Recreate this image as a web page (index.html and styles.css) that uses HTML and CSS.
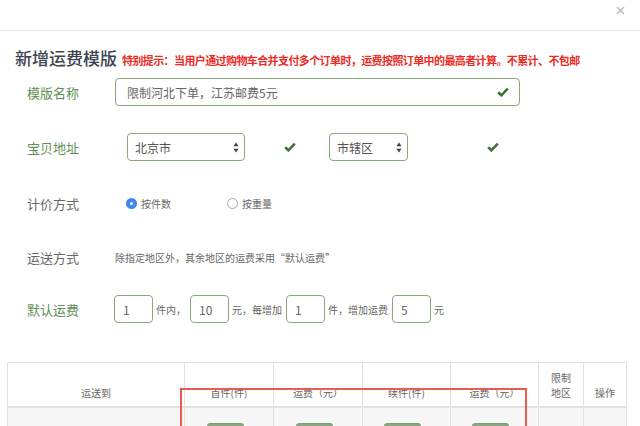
FILE: index.html
```html
<!DOCTYPE html>
<html lang="zh-CN">
<head>
<meta charset="utf-8">
<link rel="stylesheet" href="styles.css">
</head>
<body>
<div class="modal">
  <div class="modal-top">
    <span class="close"><svg width="9" height="9" viewBox="0 0 9 9"><path d="M1 1L8 8M8 1L1 8" stroke="#bdbdbd" stroke-width="1.6" fill="none"/></svg></span>
  </div>
  <div class="head">
    <h2 class="title">新增运费模版</h2>
    <span class="hint">特别提示：当用户通过购物车合并支付多个订单时，运费按照订单中的最高者计算。不累计、不包邮</span>
  </div>
  <div class="form">
    <div class="row r1">
      <label class="lbl ok">模版名称</label>
      <div class="field wide"><span class="val">限制河北下单，江苏邮费5元</span>
        <svg class="check" width="12" height="10" viewBox="0 0 12 10"><path d="M1.2 5.2L4.4 8.3L10.8 1.6" stroke="#3f7436" stroke-width="2.6" fill="none"/></svg>
      </div>
    </div>
    <div class="row r2">
      <label class="lbl ok">宝贝地址</label>
      <div class="field select s1"><span class="val">北京市</span>
        <svg class="arrows" width="6" height="11" viewBox="0 0 6 11"><path d="M3 0.5L5.6 4.3H0.4Z M3 10.5L5.6 6.7H0.4Z" fill="#444"/></svg>
      </div>
      <svg class="check c1" width="12" height="10" viewBox="0 0 12 10"><path d="M1.2 5.2L4.4 8.3L10.8 1.6" stroke="#3f7436" stroke-width="2.6" fill="none"/></svg>
      <div class="field select s2"><span class="val">市辖区</span>
        <svg class="arrows" width="6" height="11" viewBox="0 0 6 11"><path d="M3 0.5L5.6 4.3H0.4Z M3 10.5L5.6 6.7H0.4Z" fill="#444"/></svg>
      </div>
      <svg class="check c2" width="12" height="10" viewBox="0 0 12 10"><path d="M1.2 5.2L4.4 8.3L10.8 1.6" stroke="#3f7436" stroke-width="2.6" fill="none"/></svg>
    </div>
    <div class="row r3">
      <label class="lbl">计价方式</label>
      <div class="radios">
        <span class="opt"><span class="radio on"></span>按件数</span>
        <span class="opt second"><span class="radio"></span>按重量</span>
      </div>
    </div>
    <div class="row r4">
      <label class="lbl">运送方式</label>
      <span class="note">除指定地区外，其余地区的运费采用“默认运费”</span>
    </div>
    <div class="row r5">
      <label class="lbl ok">默认运费</label>
      <div class="fees">
        <div class="field small"><span class="val">1</span></div>
        <span class="sep">件内，</span>
        <div class="field small"><span class="val">10</span></div>
        <span class="sep">元，每增加</span>
        <div class="field small"><span class="val">1</span></div>
        <span class="sep">件，增加运费</span>
        <div class="field small"><span class="val">5</span></div>
        <span class="sep">元</span>
      </div>
    </div>
  </div>
  <div class="table-wrap">
    <table class="grid">
      <colgroup>
        <col class="w-dest"><col class="w-mid"><col class="w-mid"><col class="w-mid2"><col class="w-mid2"><col class="w-lim"><col class="w-op">
      </colgroup>
      <thead>
        <tr>
          <th>运送到</th><th>首件(件)</th><th>运费（元）</th><th>续件(件)</th><th>运费（元）</th><th>限制<br>地区</th><th>操作</th>
        </tr>
      </thead>
      <tbody>
        <tr>
          <td></td>
          <td><div class="cell-input"></div></td>
          <td><div class="cell-input"></div></td>
          <td><div class="cell-input"></div></td>
          <td><div class="cell-input"></div></td>
          <td></td><td></td>
        </tr>
      </tbody>
    </table>
    <div class="highlight"></div>
  </div>
</div>
</body>
</html>
```

FILE: styles.css
```css
html, body {
  margin: 0;
  padding: 0;
  background: #fff;
}
body {
  width: 640px;
  height: 426px;
  overflow: hidden;
  font-family: "Noto Sans CJK SC", "Noto Sans", sans-serif;
  color: #666;
}
.modal {
  position: relative;
  width: 640px;
}
.modal-top {
  height: 30px;
  border-bottom: 1px solid #e7e7e7;
  display: flex;
  justify-content: flex-end;
  align-items: flex-start;
  padding-right: 15px;
}
.close {
  display: block;
  margin-top: 6px;
  width: 9px;
  height: 9px;
  line-height: 0;
}
.head {
  display: flex;
  align-items: baseline;
  padding-left: 15px;
  margin-top: 15px;
  height: 24px;
}
.title {
  margin: 0;
  font-size: 17px;
  line-height: 24px;
  font-weight: 500;
  color: #3c4250;
}
.hint {
  margin-left: 5px;
  font-size: 11px;
  font-weight: 700;
  color: #ee2a24;
  letter-spacing: -0.6px;
}
.form {
  margin-top: 8px;
}
.row {
  display: flex;
  align-items: center;
  height: 28px;
}
.r1 { margin-bottom: 27px; }
.r2 { margin-bottom: 28px; }
.r3 { margin-bottom: 26px; }
.r4 { margin-bottom: 24px; }
.lbl {
  flex: none;
  width: 115px;
  box-sizing: border-box;
  padding-left: 27px;
  font-size: 13px;
  color: #666;
}
.lbl.ok {
  color: #5f8f55;
}
.field {
  box-sizing: border-box;
  height: 28px;
  border: 1px solid #88a87e;
  border-radius: 4px;
  display: flex;
  align-items: center;
  background: #fff;
}
.val {
  font-size: 12px;
  color: #666;
  white-space: nowrap;
}
.wide {
  width: 405px;
  padding: 0 10px 0 11px;
  justify-content: space-between;
}
.check {
  display: block;
  flex: none;
}
.select {
  padding: 0 5px 0 7px;
  justify-content: space-between;
}
.select .val {
  color: #555;
}
.s1 {
  margin-left: 12px;
  width: 118px;
}
.c1 {
  margin-left: 39px;
}
.s2 {
  margin-left: 33px;
  width: 79px;
}
.c2 {
  margin-left: 79px;
}
.radios {
  display: flex;
  align-items: center;
  margin-left: 11px;
  font-size: 10px;
  color: #666;
}
.opt {
  display: flex;
  align-items: center;
}
.opt.second {
  margin-left: 56px;
}
.radio {
  box-sizing: border-box;
  width: 11px;
  height: 11px;
  border-radius: 50%;
  border: 1px solid #a9a9a9;
  margin-right: 4px;
  background: #fff;
}
.radio.on {
  border: 4px solid #3f86f2;
  background: #fff;
}
.note {
  font-size: 10px;
  color: #666;
}
.fees {
  display: flex;
  align-items: center;
  margin-left: -1px;
}
.small {
  width: 39px;
  padding-left: 8px;
}
.sep {
  font-size: 10px;
  color: #666;
  margin: 0 4px 0 3px;
  white-space: nowrap;
}
.table-wrap {
  position: relative;
  margin-top: 39px;
  padding-left: 7px;
}
.grid {
  width: 620px;
  border-collapse: collapse;
  table-layout: fixed;
  font-size: 10px;
  color: #666;
}
.w-dest { width: 177px; }
.w-mid { width: 89px; }
.w-mid2 { width: 88px; }
.w-lim { width: 45px; }
.w-op { width: 43px; }
.grid th, .grid td {
  border: 1px solid #e2e2e2;
  text-align: center;
  padding: 0;
}
.grid th {
  height: 37px;
  vertical-align: bottom;
  padding-bottom: 6px;
  line-height: 15px;
  font-weight: 400;
  background: #fff;
}
.grid thead tr {
  border-bottom: 2px solid #e2e2e2;
}
.grid td {
  background: #f7f7f7;
  height: 50px;
  vertical-align: top;
}
.cell-input {
  width: 37px;
  height: 24px;
  margin: 15px auto 0;
  border: 1px solid #7e9c76;
  border-radius: 3px;
  background: #89a780;
  box-sizing: border-box;
  position: relative;
  left: -4px;
}
.highlight {
  position: absolute;
  left: 180px;
  top: 26px;
  width: 347px;
  height: 80px;
  box-sizing: border-box;
  border: 2px solid #ec5a50;
}
```
